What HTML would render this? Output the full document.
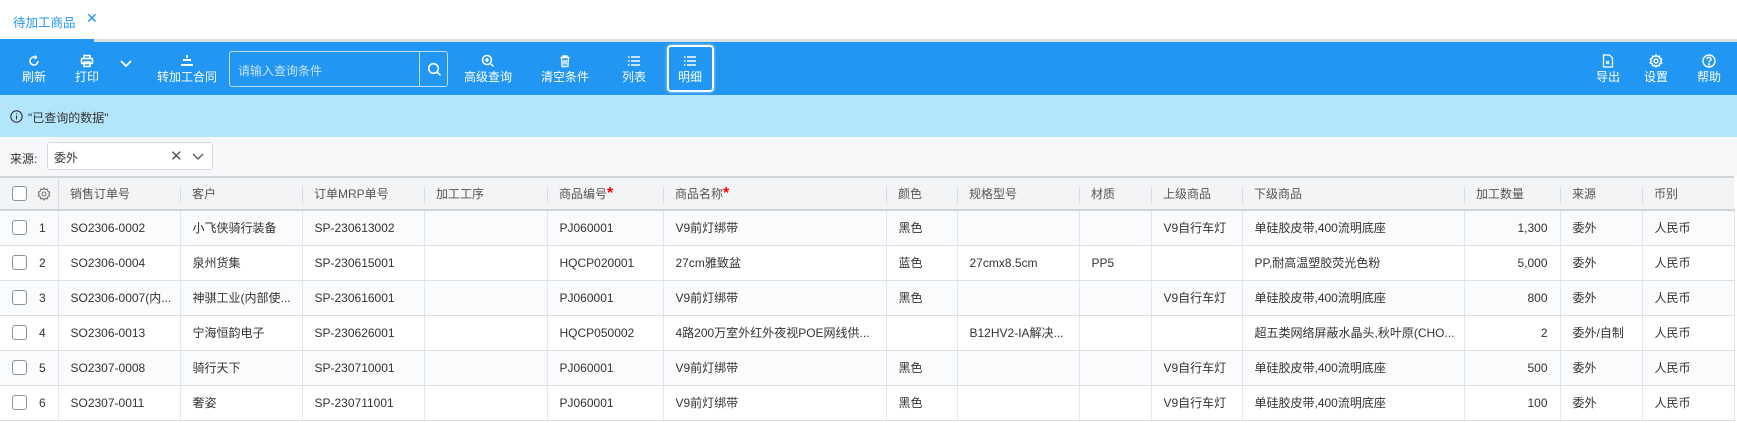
<!DOCTYPE html>
<html><head><meta charset="utf-8"><style>
*{margin:0;padding:0;box-sizing:border-box}
body{width:1737px;height:423px;overflow:hidden;background:#fff;font-family:"Liberation Sans","Noto Sans CJK SC",sans-serif;font-size:12px;color:#333;position:relative}
.abs{position:absolute}
.tab{left:13px;top:12px;font-size:12.5px;color:#2196f3}
.tabx{left:86px;top:10px;font-size:14px;color:#2196f3}
.tl{left:0;top:39px;width:1737px;height:3px;background:#dde1e6}
.tl2{left:0;top:39px;width:94px;height:3px;background:#2196f3}
.bar{left:0;top:42px;width:1737px;height:53px;background:#2196f3}
.btn{position:absolute;top:0;height:53px;color:#fff;text-align:center;transform:translateX(-50%);white-space:nowrap}
.btn svg{position:absolute;left:50%;top:12px;margin-left:-7px}
.btn span{display:block;margin-top:27px;font-size:12px;line-height:16px}
.search{left:229px;top:9px;width:219px;height:36px;border:1px solid rgba(255,255,255,.7);border-radius:3px}
.search span{position:absolute;left:8px;top:10px;color:#c6e2fb;font-size:12px}
.search i{position:absolute;left:189px;top:0;width:1px;height:34px;background:rgba(255,255,255,.7)}
.mx{left:667px;top:3px;width:47px;height:47px;border:2px solid #fff;border-radius:4px;box-shadow:0 0 3px #bde}
.info{left:0;top:95px;width:1737px;height:42px;background:#b3e5fb}
.filt{left:0;top:137px;width:1737px;height:39px;background:#f5f7f9}
.sel{left:47px;top:142px;width:166px;height:28px;border:1px solid #d7dbe0;border-radius:3px;background:#fff}
table{position:absolute;left:0;top:176px;border-collapse:collapse;table-layout:fixed;width:1734px}
td,th{height:35px;border-bottom:1px solid #dcdfe4;border-right:1px solid #e3e6ea;padding:0 12px;text-align:left;white-space:nowrap;overflow:hidden;font-weight:normal}
th{height:33px;background:#f3f4f5;color:#555;border-top:2px solid #d0d3d8;border-bottom:2px solid #d0d3d8;border-right:none;position:relative}
th:not(:first-child):before{content:"";position:absolute;left:0;top:9px;height:16px;width:1px;background:#d8dbe0}
th:nth-child(2):before{top:0;height:31px}
tr:nth-child(even) td{background:#f9fbfd}
.cb{display:inline-block;width:15px;height:15px;border:1px solid #8a939c;border-radius:3px;vertical-align:middle;background:#fff}
.ix{vertical-align:middle;margin-left:12px}
.r{color:#f00;font-size:16px;font-weight:bold}
.n{text-align:right}
</style></head><body>
<div class="abs tab">待加工商品</div><div class="abs tabx">✕</div>
<div class="abs tl"></div><div class="abs tl2"></div>
<div class="abs bar">
 <div class="btn" style="left:34px"><svg width="14" height="14" viewBox="0 0 14 14" fill="none" stroke="#fff" stroke-width="1.5"><path d="M11 7a4 4 0 1 1-2-3.5"/><path d="M8 1.5l1.5 2-2 1.3"/></svg><span>刷新</span></div>
 <div class="btn" style="left:87px"><svg width="14" height="14" viewBox="0 0 14 14" fill="none" stroke="#fff" stroke-width="1.5"><rect x="4" y="1.5" width="6" height="3"/><rect x="1.5" y="4.5" width="11" height="5" rx="1"/><rect x="4" y="8" width="6" height="4.5"/></svg><span>打印</span></div>
 <div class="btn" style="left:126px"><svg width="14" height="14" viewBox="0 0 14 14" fill="none" stroke="#fff" stroke-width="1.8" style="top:15px"><path d="M2 4l5 5 5-5"/></svg></div>
 <div class="btn" style="left:187px"><svg width="14" height="14" viewBox="0 0 14 14" fill="#fff"><rect x="6" y="1" width="2" height="3"/><rect x="3" y="5" width="8" height="2"/><rect x="1" y="10" width="12" height="2"/></svg><span>转加工合同</span></div>
 <div class="abs search"><span>请输入查询条件</span><i></i><svg class="abs" style="left:197px;top:10px" width="15" height="15" viewBox="0 0 15 15" fill="none" stroke="#fff" stroke-width="1.6"><circle cx="6.5" cy="6.5" r="4.8"/><path d="M10 10l3.5 3.5"/></svg></div>
 <div class="btn" style="left:488px"><svg width="14" height="14" viewBox="0 0 14 14" fill="none" stroke="#fff" stroke-width="1.5"><circle cx="6" cy="6" r="4.5"/><path d="M9.5 9.5l3 3M6 4v4M4 6h4"/></svg><span>高级查询</span></div>
 <div class="btn" style="left:565px"><svg width="14" height="14" viewBox="0 0 14 14" fill="none" stroke="#fff" stroke-width="1.4"><path d="M2.5 3.5h9M5 3.5V2h4v1.5M3.5 3.5l.7 9h5.6l.7-9M6 6v4.5M8 6v4.5"/></svg><span>清空条件</span></div>
 <div class="btn" style="left:634px"><svg width="14" height="14" viewBox="0 0 14 14" fill="none" stroke="#fff" stroke-width="1.5"><path d="M1 3h1.5M4 3h9M1 7h1.5M4 7h9M1 11h1.5M4 11h9"/></svg><span>列表</span></div>
 <div class="abs mx"></div>
 <div class="btn" style="left:690px"><svg width="14" height="14" viewBox="0 0 14 14" fill="none" stroke="#fff" stroke-width="1.5"><path d="M1 3h1.5M4 3h9M1 7h1.5M4 7h9M1 11h1.5M4 11h9"/></svg><span>明细</span></div>
 <div class="btn" style="left:1608px"><svg width="14" height="14" viewBox="0 0 14 14" fill="none" stroke="#fff" stroke-width="1.3"><path d="M2.5 1h6l3 3v9h-9z"/><path d="M5 7l3 3M8 7l-3 3"/></svg><span>导出</span></div>
 <div class="btn" style="left:1656px"><svg width="14" height="14" viewBox="0 0 14 14" fill="none" stroke="#fff" stroke-width="1.4"><circle cx="7" cy="7" r="2"/><path d="M7 1l1.3 1.6 2-.4.5 2 1.9.9-.9 1.9.9 1.9-1.9.9-.5 2-2-.4L7 13l-1.3-1.6-2 .4-.5-2-1.9-.9.9-1.9-.9-1.9 1.9-.9.5-2 2 .4z"/></svg><span>设置</span></div>
 <div class="btn" style="left:1709px"><svg width="14" height="14" viewBox="0 0 14 14" fill="none" stroke="#fff" stroke-width="1.4"><circle cx="7" cy="7" r="6"/><path d="M5 5.3a2 2 0 1 1 2.6 1.9c-.5.2-.6.6-.6 1.3"/><circle cx="7" cy="10.5" r=".5" fill="#fff"/></svg><span>帮助</span></div>
</div>
<div class="abs info"><svg class="abs" style="left:10px;top:15px" width="13" height="13" viewBox="0 0 13 13" fill="none" stroke="#333" stroke-width="1.1"><circle cx="6.5" cy="6.5" r="5.7"/><path d="M6.5 5.5v4M6.5 3.3v1"/></svg><span class="abs" style="left:28px;top:14px;color:#333">"已查询的数据"</span></div>
<div class="abs filt"><span class="abs" style="left:10px;top:13px">来源:</span></div>
<div class="abs sel"><span class="abs" style="left:6px;top:6px">委外</span><span class="abs" style="left:122px;top:4px;font-size:15px;color:#555">✕</span><svg class="abs" style="left:144px;top:10px" width="12" height="8" viewBox="0 0 12 8" fill="none" stroke="#555" stroke-width="1.3"><path d="M1 1l5 5 5-5"/></svg></div>
<table>
<colgroup><col style="width:58px"><col style="width:122px"><col style="width:122px"><col style="width:122px"><col style="width:123px"><col style="width:116px"><col style="width:223px"><col style="width:71px"><col style="width:122px"><col style="width:72px"><col style="width:91px"><col style="width:222px"><col style="width:96px"><col style="width:82px"><col style="width:92px"></colgroup>
<tr><th style="padding:0 0 0 12px"><span class="cb"></span><svg style="vertical-align:middle;margin-left:10px" width="14" height="14" viewBox="0 0 14 14" fill="none" stroke="#777" stroke-width="1.1"><circle cx="7" cy="7" r="2"/><path d="M7 1l1.3 1.6 2-.4.5 2 1.9.9-.9 1.9.9 1.9-1.9.9-.5 2-2-.4L7 13l-1.3-1.6-2 .4-.5-2-1.9-.9.9-1.9-.9-1.9 1.9-.9.5-2 2 .4z"/></svg></th><th>销售订单号</th><th>客户</th><th>订单MRP单号</th><th>加工工序</th><th>商品编号<span class="r">*</span></th><th>商品名称<span class="r">*</span></th><th>颜色</th><th>规格型号</th><th>材质</th><th>上级商品</th><th>下级商品</th><th>加工数量</th><th>来源</th><th>币别</th></tr>
<tr><td style="padding-left:12px"><span class="cb"></span><span class="ix">1</span></td><td>SO2306-0002</td><td>小飞侠骑行装备</td><td>SP-230613002</td><td></td><td>PJ060001</td><td>V9前灯绑带</td><td>黑色</td><td></td><td></td><td>V9自行车灯</td><td>单硅胶皮带,400流明底座</td><td class="n">1,300</td><td>委外</td><td>人民币</td></tr>
<tr><td style="padding-left:12px"><span class="cb"></span><span class="ix">2</span></td><td>SO2306-0004</td><td>泉州货集</td><td>SP-230615001</td><td></td><td>HQCP020001</td><td>27cm雅致盆</td><td>蓝色</td><td>27cmx8.5cm</td><td>PP5</td><td></td><td>PP,耐高温塑胶荧光色粉</td><td class="n">5,000</td><td>委外</td><td>人民币</td></tr>
<tr><td style="padding-left:12px"><span class="cb"></span><span class="ix">3</span></td><td>SO2306-0007(内...</td><td>神骐工业(内部使...</td><td>SP-230616001</td><td></td><td>PJ060001</td><td>V9前灯绑带</td><td>黑色</td><td></td><td></td><td>V9自行车灯</td><td>单硅胶皮带,400流明底座</td><td class="n">800</td><td>委外</td><td>人民币</td></tr>
<tr><td style="padding-left:12px"><span class="cb"></span><span class="ix">4</span></td><td>SO2306-0013</td><td>宁海恒韵电子</td><td>SP-230626001</td><td></td><td>HQCP050002</td><td>4路200万室外红外夜视POE网线供...</td><td></td><td>B12HV2-IA解决...</td><td></td><td></td><td>超五类网络屏蔽水晶头,秋叶原(CHO...</td><td class="n">2</td><td>委外/自制</td><td>人民币</td></tr>
<tr><td style="padding-left:12px"><span class="cb"></span><span class="ix">5</span></td><td>SO2307-0008</td><td>骑行天下</td><td>SP-230710001</td><td></td><td>PJ060001</td><td>V9前灯绑带</td><td>黑色</td><td></td><td></td><td>V9自行车灯</td><td>单硅胶皮带,400流明底座</td><td class="n">500</td><td>委外</td><td>人民币</td></tr>
<tr><td style="padding-left:12px"><span class="cb"></span><span class="ix">6</span></td><td>SO2307-0011</td><td>奢姿</td><td>SP-230711001</td><td></td><td>PJ060001</td><td>V9前灯绑带</td><td>黑色</td><td></td><td></td><td>V9自行车灯</td><td>单硅胶皮带,400流明底座</td><td class="n">100</td><td>委外</td><td>人民币</td></tr>
</table>
</body></html>
